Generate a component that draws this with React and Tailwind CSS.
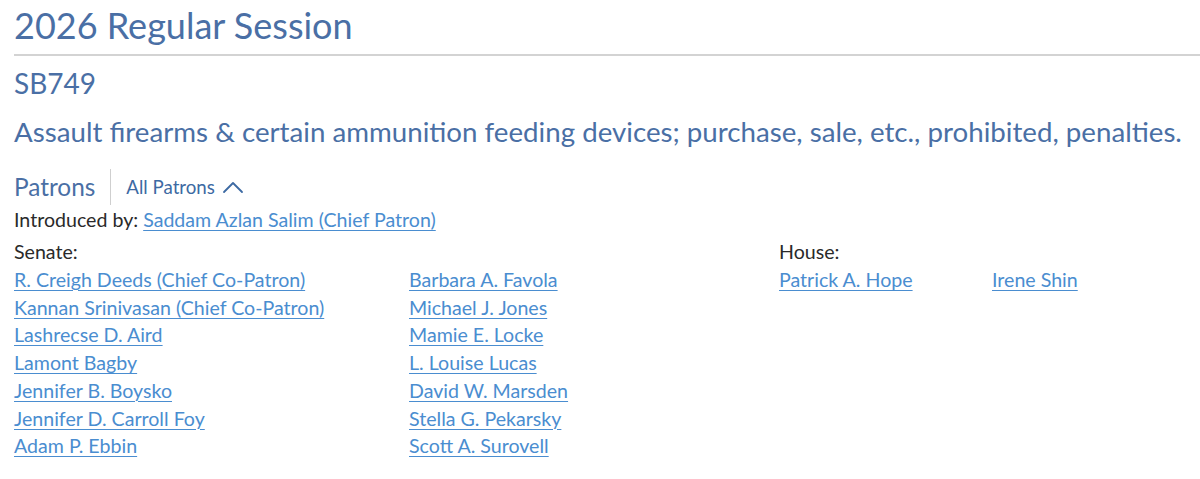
const senateLeft = [
	"R. Creigh Deeds (Chief Co-Patron)",
	"Kannan Srinivasan (Chief Co-Patron)",
	"Lashrecse D. Aird",
	"Lamont Bagby",
	"Jennifer B. Boysko",
	"Jennifer D. Carroll Foy",
	"Adam P. Ebbin",
];

const senateRight = [
	"Barbara A. Favola",
	"Michael J. Jones",
	"Mamie E. Locke",
	"L. Louise Lucas",
	"David W. Marsden",
	"Stella G. Pekarsky",
	"Scott A. Surovell",
];

const PatronLink = ({ name }) => (
	<a href="#" className="block w-fit text-[#4a8dd0] underline underline-offset-[3px] decoration-1 leading-[27.7px]">
		{name}
	</a>
);

const App = () => {
	return (
		<div className="bg-white min-h-[479px] pl-[14px] overflow-hidden" style={{ fontFamily: "Lato, 'Open Sans', sans-serif" }}>
			<h1 className="text-[36px] leading-[48px] pt-[1px] text-[#4a6fa5] font-normal">2026 Regular Session</h1>
			<div className="mt-[5px] h-[2px] bg-[#d3d3d3]" />
			<h2 className="mt-[10px] text-[28px] leading-[34px] text-[#4a6fa5]">SB749</h2>
			<h3 className="mt-[15px] text-[27.7px] leading-[34px] text-[#4a6fa5] whitespace-nowrap">
				Assault firearms &amp; certain ammunition feeding devices; purchase, sale, etc., prohibited, penalties.
			</h3>
			<div className="mt-[20px] flex items-center h-[36px]">
				<span className="text-[24.4px] text-[#4a6fa5] pr-[15px]">Patrons</span>
				<span className="w-px h-[36px] bg-[#cfcfcf]" />
				<button type="button" className="flex items-center gap-[7px] pl-[15px] text-[18.7px] text-[#3d6aa3]">
					All Patrons
					<svg width="22" height="14" viewBox="0 0 22 14" fill="none" stroke="currentColor" strokeWidth="1.8" strokeLinecap="round" strokeLinejoin="round">
						<path d="M2 12 L11 3 L20 12" />
					</svg>
				</button>
			</div>
			<div className="mt-[2px] text-[19.6px] leading-[26px] text-[#2a2a2a]">
				Introduced by:{" "}
				<a href="#" className="text-[#4a8dd0] underline underline-offset-[3px] decoration-1">
					Saddam Azlan Salim (Chief Patron)
				</a>
			</div>
			<div className="mt-[5px] flex text-[19.6px]">
				<div className="w-[765px]">
					<div className="text-[#2a2a2a] leading-[28px]">Senate:</div>
					<div className="flex">
						<div className="w-[395px]">
							{senateLeft.map((n) => (
								<PatronLink key={n} name={n} />
							))}
						</div>
						<div>
							{senateRight.map((n) => (
								<PatronLink key={n} name={n} />
							))}
						</div>
					</div>
				</div>
				<div>
					<div className="text-[#2a2a2a] leading-[28px]">House:</div>
					<div className="flex">
						<div className="w-[213px]">
							<PatronLink name="Patrick A. Hope" />
						</div>
						<div>
							<PatronLink name="Irene Shin" />
						</div>
					</div>
				</div>
			</div>
		</div>
	);
};

export default App;
